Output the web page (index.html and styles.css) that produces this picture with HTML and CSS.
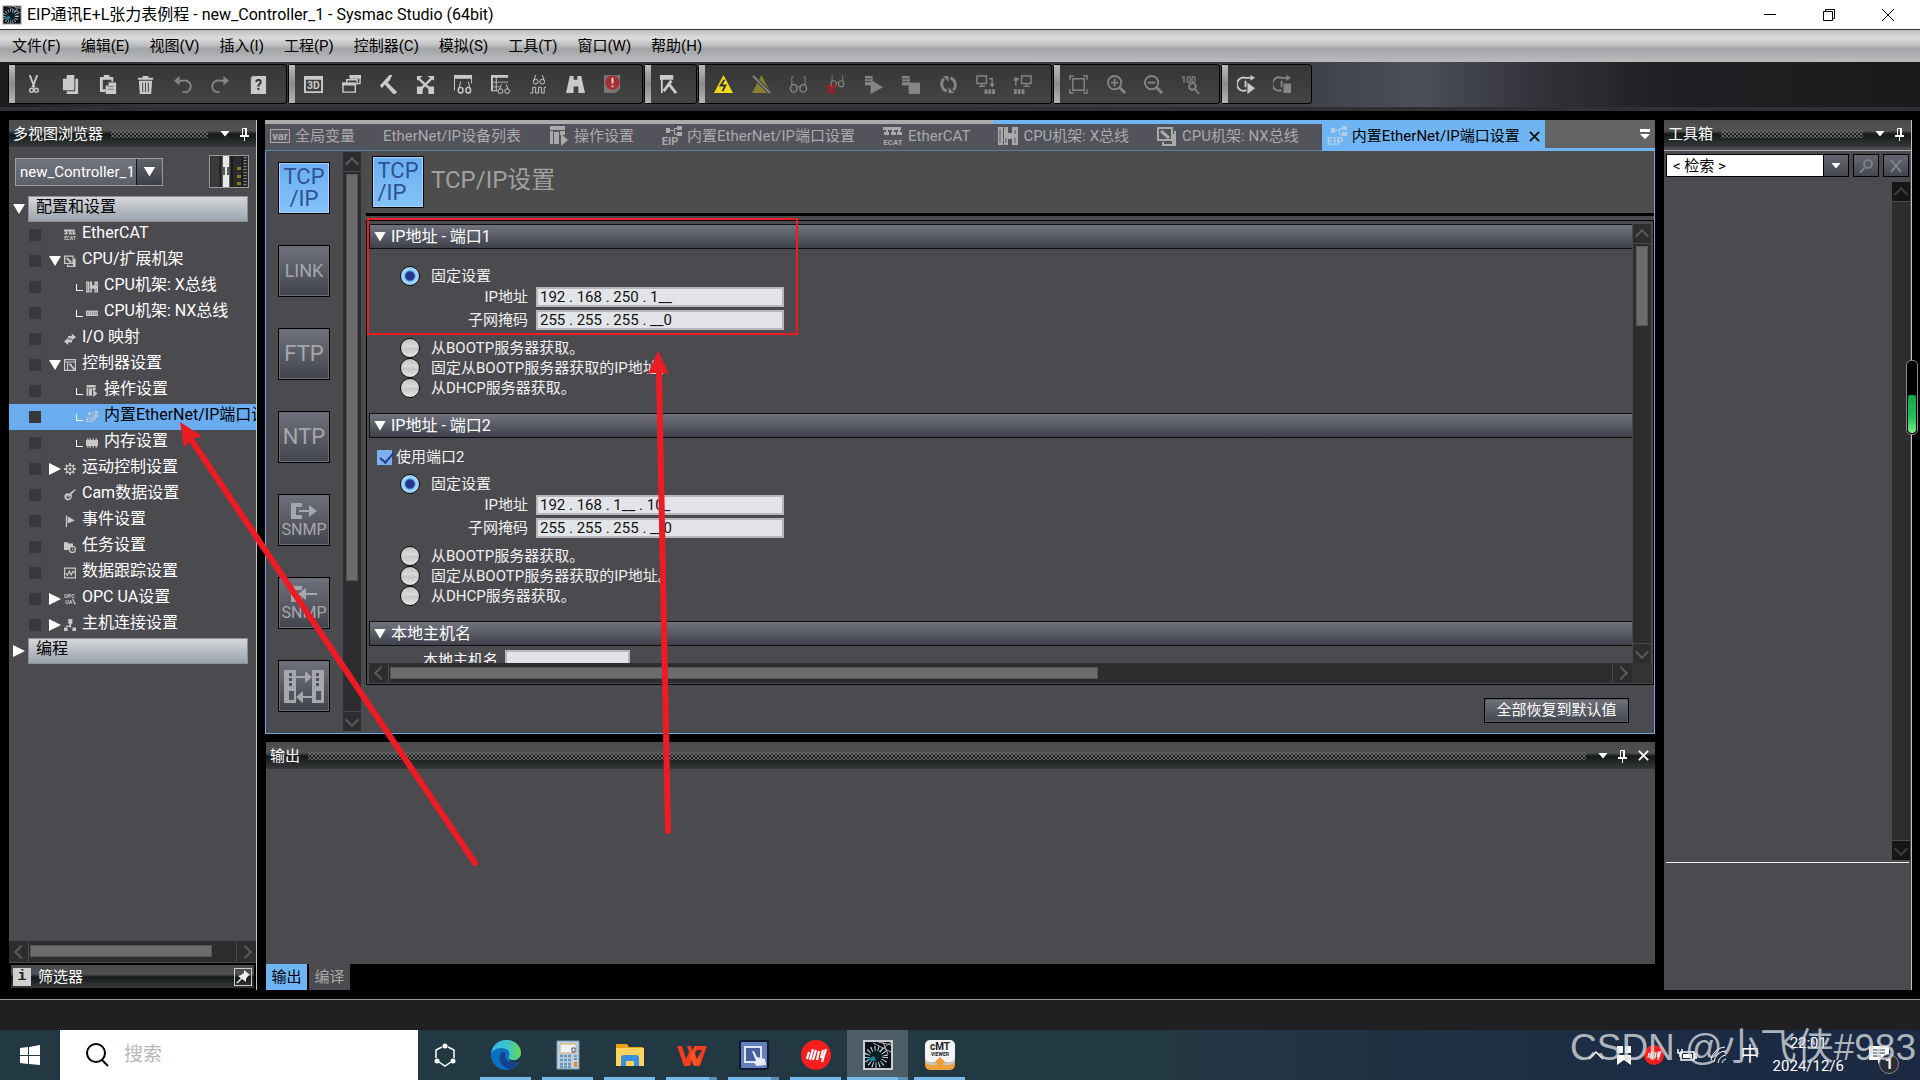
FILE: index.html
```html
<!DOCTYPE html>
<html lang="zh-CN">
<head>
  <meta charset="UTF-8">
  <meta name="viewport" content="width=device-width, initial-scale=1.0">
  <title>EIP通讯E+L张力表例程 - new_Controller_1 - Sysmac Studio (64bit)</title>
  <link rel="stylesheet" href="styles.css">
</head>
<body>
  <!-- Icon set -->
  <svg class="sprite" aria-hidden="true">
    <symbol id="i-var" viewBox="0 0 20 20"><rect x="0.500" y="3.500" width="19" height="13" fill="#5c5c60" stroke="currentColor"/><text x="10" y="14" font-size="11" font-weight="bold" text-anchor="middle" fill="currentColor">var</text></symbol>
    <symbol id="i-ecat" viewBox="0 0 20 20"><path d="M0 1h18v3H0zM3 4h2v5H3zM9 4h2v5H9zM15 4h2v5h-2zM1 6h5v3H1zM8 6h5v3H8zM14 6h5v3h-5z" fill="currentColor"/><text x="10" y="19" font-size="8" font-weight="bold" text-anchor="middle" fill="currentColor">ECAT</text></symbol>
    <symbol id="i-eip" viewBox="0 0 20 20"><path d="M4 2h4v5H4zM15 0h5v4h-5zM15 6h5v4h-5zM8 4h4v1H8zM12 2h3v1h-2v5h2v1h-3z" fill="currentColor"/><text x="8" y="19" font-size="11" font-weight="bold" text-anchor="middle" fill="currentColor">EIP</text></symbol>
    <symbol id="i-op" viewBox="0 0 20 20"><path d="M1 0h15v4H1zM1 5h3v13H1zM5 6h5v12H5zM11 5h5v4h-5z" fill="currentColor"/><path d="M12 8l7 6-7 6z" fill="currentColor"/></symbol>
    <symbol id="i-rack" viewBox="0 0 20 20"><path d="M0 1h5v18H0zM6 1h4v18H6zM14 1h6v18h-6zM10 7h4v6h-4z" fill="currentColor"/><path d="M2 3v14M8 12v5M17 4v4M17 12v5" stroke="#55565e" fill="none"/></symbol>
    <symbol id="i-nxrack" viewBox="0 0 20 20"><path d="M0 6h20v9H0z" fill="currentColor"/><path d="M3 8v5M7 8v5M11 8v5M15 8v5M18 8v5" stroke="#4b4a4f"/></symbol>
    <symbol id="i-cpu" viewBox="0 0 20 20"><path d="M1 2h14v12H1zM18 5v14H6v-3" fill="none" stroke="currentColor" stroke-width="2"/><path d="M4 5l8 7" stroke="currentColor" stroke-width="3"/><path d="M15 8h4v11h-4z" fill="currentColor"/></symbol>
    <symbol id="i-io" viewBox="0 0 20 20"><path d="M6 5h7V1l7 6-7 5V9H8zM14 11H7V8l-7 6 7 6v-4h6z" fill="currentColor"/></symbol>
    <symbol id="i-ctrl" viewBox="0 0 20 20"><path d="M1 1h18v18H1zM1 5h18M6 5v14M8 9h5" fill="none" stroke="currentColor" stroke-width="2"/><path d="M10 9l8 9" stroke="currentColor" stroke-width="3"/></symbol>
    <symbol id="i-mem" viewBox="0 0 20 20"><path d="M0 5h20v10H0zM2 2h2v16H2zM6 2h2v16H6zM11 2h2v16h-2zM16 2h2v16h-2z" fill="currentColor"/></symbol>
    <symbol id="i-gear" viewBox="0 0 20 20"><circle cx="10" cy="10" r="6" fill="none" stroke="currentColor" stroke-width="2"/><circle cx="10" cy="10" r="2.500" fill="currentColor"/><path d="M10 0v4M10 16v4M0 10h4M16 10h4M3 3l3 3M14 14l3 3M17 3l-3 3M6 14l-3 3" stroke="currentColor" stroke-width="3"/></symbol>
    <symbol id="i-cam" viewBox="0 0 20 20"><path d="M13 9c1 6-2 10-7 10-6-1-7-8-3-11 2-1 4-1 6 0l8-7h3L9 13c-2 1-4-1-2-3-3 0-4 6-1 6 3 1 5-2 5-5z" fill="currentColor"/></symbol>
    <symbol id="i-flag" viewBox="0 0 20 20"><path d="M3 1h2v19H3zM6 2l12 7-12 5z" fill="currentColor"/></symbol>
    <symbol id="i-task" viewBox="0 0 20 20"><path d="M0 2h6l2 2h7v5l-6 6H0z" fill="currentColor"/><circle cx="14" cy="14" r="5" fill="#4b4a4f" stroke="currentColor" stroke-width="2"/><path d="M14 11v4h2" stroke="currentColor" fill="none"/></symbol>
    <symbol id="i-trace" viewBox="0 0 20 20"><path d="M1 2h18v16H1z M3 10l3 4 3-7 3 6 3-6 3 3" fill="none" stroke="currentColor" stroke-width="2"/></symbol>
    <symbol id="i-opc" viewBox="0 0 20 20"><text x="9" y="9" font-size="9" font-weight="bold" text-anchor="middle" fill="currentColor">OPC</text><text x="8" y="19" font-size="9" font-weight="bold" text-anchor="middle" fill="currentColor">UA</text><path d="M14 10l5 9" stroke="currentColor" stroke-width="2"/></symbol>
    <symbol id="i-host" viewBox="0 0 20 20"><path d="M7 0h7v8H7zM9 8h3v6H9zM0 14h6v6H0zM14 14h6v6h-6zM3 11h7v2H3z" fill="currentColor"/></symbol>
    <symbol id="i-pin" viewBox="0 0 10 14"><path d="M2.500 1.500h4v7h-4z" fill="none" stroke="#fff"/><path d="M5 1h2v8H5zM0 8h9v2H0zM4 10h1v4H4z" fill="#fff"/></symbol>
    <symbol id="i-glasses" viewBox="0 0 20 20"><path d="M5 2H3v10M15 2h2v10M8 13q2-2 4 0" fill="none" stroke="currentColor"/><ellipse cx="5" cy="14" rx="3.500" ry="4" fill="none" stroke="currentColor" stroke-width="1.500"/><ellipse cx="15" cy="14" rx="3.500" ry="4" fill="none" stroke="currentColor" stroke-width="1.500"/></symbol>
    <symbol id="i-dyp" viewBox="0 0 30 30"><circle cx="15" cy="15" r="15" fill="#fa1e1e"/><path d="M8 12l-2 7M12 9l-3 11M15 10l-3 10M18 11l-2 9M22 10l-2 8M25 9l-4 13" stroke="#fff" stroke-width="2.200" fill="none"/></symbol>
    <symbol id="i-sysmac" viewBox="0 0 30 30"><rect x="1" y="1" width="28" height="28" fill="#0d1014" stroke="#c9ccd0" stroke-width="2"/><path d="M10 3l18 9M28 2L16 12M20 2l5 12M15 2l13 3" stroke="#aab0b4"/><ellipse cx="13" cy="17" rx="9" ry="8" fill="none" stroke="#b4dcea" stroke-width="6" stroke-dasharray="1 2.200"/><ellipse cx="13" cy="16" rx="6" ry="5" fill="#082028"/><path d="M3 20l8-4 2 5z" fill="#1d8a96"/></symbol>
  </svg>

  <header class="titlebar">
    <svg class="app-icon"><use href="#i-sysmac"/></svg>
    <h1 class="title">EIP通讯E+L张力表例程 - new_Controller_1 - Sysmac Studio (64bit)</h1>
    <div class="window-buttons">
      <button aria-label="最小化"><svg width="14" height="14"><path d="M1 6.500h12" stroke="#000"/></svg></button>
      <button aria-label="还原"><svg width="14" height="14"><path d="M1.500 3.500h9v9h-9zM3.500 3V1.500h9v9H11" fill="none" stroke="#000"/></svg></button>
      <button aria-label="关闭"><svg width="14" height="14"><path d="M1 1l12 12M13 1L1 13" stroke="#000"/></svg></button>
    </div>
  </header>

  <nav class="menubar">
    <button>文件(F)</button>
    <button>编辑(E)</button>
    <button>视图(V)</button>
    <button>插入(I)</button>
    <button>工程(P)</button>
    <button>控制器(C)</button>
    <button>模拟(S)</button>
    <button>工具(T)</button>
    <button>窗口(W)</button>
    <button>帮助(H)</button>
  </nav>

  <div class="toolbar-area">
    <div class="toolbar">
      <div class="tool-group g7">
        <button aria-label="剪切"><svg viewBox="0 0 20 20"><path d="M6 0l5 13M14 0L9 13" stroke="currentColor" stroke-width="2"/><circle cx="8" cy="16" r="2" fill="none" stroke="currentColor" stroke-width="1.500"/><circle cx="13" cy="16" r="2" fill="none" stroke="currentColor" stroke-width="1.500"/></svg></button>
        <button aria-label="复制"><svg viewBox="0 0 20 20"><path d="M6 0h8v16H2V4h4z" fill="currentColor"/><path d="M15 4h3v16H6v-3h9z" fill="currentColor"/></svg></button>
        <button aria-label="粘贴"><svg viewBox="0 0 20 20"><path d="M1 2h4V0h6v2h4v5h-2V5H4v10h3v3H1z" fill="currentColor"/><path d="M10 8h8v12H7v-9h3z" fill="currentColor"/><path d="M9 12h7M9 15h7" stroke="#777"/></svg></button>
        <button aria-label="删除"><svg viewBox="0 0 20 20"><path d="M2 3h16v2H2zM7 1h6v2H7zM3 6h14l-1 14H4z" fill="currentColor"/><path d="M7 8v10M10 8v10M13 8v10" stroke="#3f3f3f"/></svg></button>
        <button class="dim" aria-label="撤消"><svg viewBox="0 0 20 20"><path d="M4 6h7a6 6 0 0 1 3 12h-4" fill="none" stroke="currentColor" stroke-width="2"/><path d="M7 1L1 6l6 5z" fill="currentColor"/></svg></button>
        <button class="dim" aria-label="重做"><svg viewBox="0 0 20 20"><path d="M16 6H9a6 6 0 0 0-3 12h3" fill="none" stroke="currentColor" stroke-width="2"/><path d="M13 1l6 5-6 5z" fill="currentColor"/></svg></button>
        <button aria-label="帮助"><svg viewBox="0 0 20 20"><path d="M7 1h12v19H3V5z" fill="currentColor"/><path d="M2 4l4-4v4z" fill="currentColor"/><text x="11" y="16" font-size="15" font-weight="bold" text-anchor="middle" fill="#333">?</text></svg></button>
      </div>
      <div class="tool-group g9">
        <button aria-label="3D"><svg viewBox="0 0 20 20"><path d="M1 2h18v16H1z" fill="none" stroke="currentColor" stroke-width="2"/><path d="M1 2h18v3H1z" fill="currentColor"/><text x="10" y="15" font-size="11" font-weight="bold" text-anchor="middle" fill="currentColor">3D</text></svg></button>
        <button aria-label="层叠窗口"><svg viewBox="0 0 20 20"><path d="M8 1h11v8h-4M1 9h13v9H1zM5 8V5h11v3" fill="none" stroke="currentColor" stroke-width="1.500"/><path d="M8 0h12v4H8zM0 8h15v3H0z" fill="currentColor"/></svg></button>
        <button aria-label="编译"><svg viewBox="0 0 20 20"><path d="M1 11L11 0h3l-3 6-2 2 10 10-3 3L6 10l-3 4z" fill="currentColor"/></svg></button>
        <button aria-label="全部编译"><svg viewBox="0 0 20 20"><path d="M2 3l15 14M17 3L3 17" stroke="currentColor" stroke-width="2.500"/><path d="M1 12h6v8H1zM13 12h6v8h-6zM12 1h7v5zM1 1h6L1 6z" fill="currentColor"/></svg></button>
        <button aria-label="监视窗口"><svg viewBox="0 0 20 20"><path d="M0 0h19v4H0zM0 4h1v12H0zM18 4h1v5h-1z" fill="currentColor"/><ellipse cx="7" cy="16" rx="2.500" ry="3" fill="none" stroke="currentColor" stroke-width="1.500"/><ellipse cx="15" cy="16" rx="2.500" ry="3" fill="none" stroke="currentColor" stroke-width="1.500"/><path d="M5 15l2-8M17 15l-2-8" stroke="currentColor"/></svg></button>
        <button aria-label="监视表"><svg viewBox="0 0 20 20"><path d="M0 0h18v3H0zM0 3h2v14H0zM5 3h1v14H5zM0 7h18v1H0zM0 12h9v1H0zM0 16h7v1H0z" fill="currentColor"/><circle cx="10" cy="17" r="2.500" fill="none" stroke="currentColor"/><circle cx="17" cy="17" r="2.500" fill="none" stroke="currentColor"/><path d="M9 15l2-5M18 15l-2-5" stroke="currentColor"/></svg></button>
        <button aria-label="数据跟踪"><svg viewBox="0 0 20 20"><circle cx="7" cy="7" r="2.500" fill="none" stroke="currentColor"/><circle cx="14" cy="7" r="2.500" fill="none" stroke="currentColor"/><path d="M5 6l2-6M16 6l-2-6M1 19h3v-6h3v6h3v-6h3v6h3v-6h2" fill="none" stroke="currentColor"/></svg></button>
        <button aria-label="查找"><svg viewBox="0 0 20 20"><path d="M4 1h4v4h4V1h4l4 18h-7v-7H8v7H0z" fill="currentColor"/></svg></button>
        <button aria-label="错误"><svg viewBox="0 0 20 20"><path d="M1 0h17v15l-5 4H1z" fill="#777"/><circle cx="10" cy="8" r="7.500" fill="#a82c34"/><path d="M9 3h2v6H9zM9 11h2v2H9z" fill="#ddd"/></svg></button>
      </div>
      <div class="tool-group g1">
        <button aria-label="故障排除"><svg viewBox="0 0 20 20"><path d="M1 0h14v5H1zM2 5h2v14H2z" fill="currentColor"/><path d="M5 17l8-11M10 9l8 10" stroke="currentColor" stroke-width="3"/></svg></button>
      </div>
      <div class="tool-group g9">
        <button aria-label="在线"><svg viewBox="0 0 20 20"><path d="M10 0l10 19H0z" fill="#f2d91c"/><path d="M11 5l-4 6h5l-3 6" fill="none" stroke="#333" stroke-width="2"/></svg></button>
        <button class="dim" aria-label="离线"><svg viewBox="0 0 20 20"><path d="M10 0l10 19H0z" fill="#8a7f30"/><path d="M1 1l18 18" stroke="#3f3f3f" stroke-width="4"/><path d="M1 1l18 18" stroke="currentColor" stroke-width="2"/></svg></button>
        <button class="dim" aria-label="监视"><svg><use href="#i-glasses"/></svg></button>
        <button class="dim" aria-label="停止监视"><svg viewBox="0 0 20 20"><use href="#i-glasses" x="4" y="-2" width="16" height="16"/><path d="M1 10l9 9M10 10l-9 9" stroke="#a01c2c" stroke-width="3"/></svg></button>
        <button class="dim" aria-label="运行模式"><svg viewBox="0 0 20 20"><path d="M1 1h8v10H1z" fill="currentColor"/><path d="M1 4h7M1 7h7" stroke="#3f3f3f"/><path d="M7 5l13 8-13 7z" fill="currentColor"/></svg></button>
        <button class="dim" aria-label="程序模式"><svg viewBox="0 0 20 20"><path d="M1 1h8v10H1z" fill="currentColor"/><path d="M1 4h7M1 7h7" stroke="#3f3f3f"/><path d="M8 8h12v12H8z" fill="currentColor"/></svg></button>
        <button class="dim" aria-label="同步"><svg viewBox="0 0 20 20"><path d="M12 3a8 8 0 0 1 3 13M8 17A8 8 0 0 1 5 4" fill="none" stroke="currentColor" stroke-width="3"/><path d="M4 1h6v6zM16 19h-6v-6z" fill="currentColor"/></svg></button>
        <button class="dim" aria-label="传送到控制器"><svg viewBox="0 0 20 20"><path d="M1 1h10v8H1zM3 12h7M6 9v3M14 4h3v7M15 9l2 3 2-3" fill="none" stroke="currentColor" stroke-width="1.500"/><path d="M9 15h3v5H9zM13 15h3v5h-3zM17 15h3v5h-3z" fill="currentColor"/></svg></button>
        <button class="dim" aria-label="从控制器传送"><svg viewBox="0 0 20 20"><path d="M9 1h10v8H9zM11 12h7M14 9v3M6 4H3v7M1 6l2-3 2 3" fill="none" stroke="currentColor" stroke-width="1.500"/><path d="M1 15h3v5H1zM5 15h3v5H5zM9 15h3v5H9z" fill="currentColor"/></svg></button>
      </div>
      <div class="tool-group g4">
        <button class="dim" aria-label="适合窗口"><svg viewBox="0 0 20 20"><path d="M4 4h12v12H4zM1 5V1h4M15 1h4v4M19 15v4h-4M5 19H1v-4" fill="none" stroke="currentColor" stroke-width="1.500"/></svg></button>
        <button class="dim" aria-label="放大"><svg viewBox="0 0 20 20"><circle cx="8" cy="8" r="7" fill="none" stroke="currentColor" stroke-width="2"/><path d="M13 13l6 6" stroke="currentColor" stroke-width="3"/><path d="M4 8h8M8 4v8" stroke="currentColor" stroke-width="2"/></svg></button>
        <button class="dim" aria-label="缩小"><svg viewBox="0 0 20 20"><circle cx="8" cy="8" r="7" fill="none" stroke="currentColor" stroke-width="2"/><path d="M13 13l6 6" stroke="currentColor" stroke-width="3"/><path d="M4 8h8" stroke="currentColor" stroke-width="2"/></svg></button>
        <button class="dim" aria-label="100%"><svg viewBox="0 0 20 20"><text x="8" y="8" font-size="9" font-weight="bold" text-anchor="middle" fill="currentColor">100</text><circle cx="12" cy="12" r="3.500" fill="none" stroke="currentColor" stroke-width="2"/><path d="M15 15l4 5" stroke="currentColor" stroke-width="2"/></svg></button>
      </div>
      <div class="tool-group g2">
        <button aria-label="运行模拟"><svg viewBox="0 0 20 20"><path d="M14 3H9a7 7 0 1 0 1 13M9 6v7" fill="none" stroke="currentColor" stroke-width="2"/><path d="M14 0l5 3-5 3zM11 8l8 6-8 6z" fill="currentColor"/></svg></button>
        <button class="dim" aria-label="停止模拟"><svg viewBox="0 0 20 20"><path d="M14 3H9a7 7 0 1 0 0 13M9 6v7" fill="none" stroke="currentColor" stroke-width="2"/><path d="M14 0l5 3-5 3zM11 9h8v10h-8z" fill="currentColor"/></svg></button>
      </div>
    </div>
  </div>

  <main class="workspace">
    <!-- Multiview explorer -->
    <aside class="panel explorer">
      <div class="panel-head">
        <h2>多视图浏览器</h2><span class="dots"></span><i class="tri-down small"></i><svg class="pin"><use href="#i-pin"/></svg>
      </div>
      <div class="device-row">
        <div class="combo">
          <select aria-label="设备"><option>new_Controller_1</option></select>
          <span class="combo-arrow"><i class="tri-down"></i></span>
        </div>
        <svg class="device-pic" viewBox="0 0 40 33"><rect width="40" height="33" fill="#2b2b2d"/><path d="M2 0h8v33H2z" fill="#3a3a3c"/><path d="M12 0h9v33h-9z" fill="#58595b"/><path d="M14 0h6v12h-2v8h2v13h-6V20h2v-8h-2z" fill="#e8e8e8"/><path d="M12 0v33M23 0v33M33 0v33" stroke="#111"/><path d="M28 12h4v3h-4zM28 20h4v3h-4zM28 27h4v3h-4z" fill="#8a7c1c"/><path d="M36 2v30" stroke="#888" stroke-width="3" stroke-dasharray="1 2"/><rect x="0.500" y="0.500" width="39" height="32" fill="none" stroke="#999"/></svg>
      </div>
      <div class="tree">
        <div class="tree-section"><i class="tri-down"></i><span>配置和设置</span></div>
        <div class="tree-row"><b></b><i></i><svg><use href="#i-ecat"/></svg><span>EtherCAT</span></div>
        <div class="tree-row"><b></b><i class="tri-down"></i><svg><use href="#i-cpu"/></svg><span>CPU/扩展机架</span></div>
        <div class="tree-row sub"><b></b><i></i><svg><use href="#i-rack"/></svg><span>CPU机架: X总线</span></div>
        <div class="tree-row sub"><b></b><i></i><svg><use href="#i-nxrack"/></svg><span>CPU机架: NX总线</span></div>
        <div class="tree-row"><b></b><i></i><svg><use href="#i-io"/></svg><span>I/O 映射</span></div>
        <div class="tree-row"><b></b><i class="tri-down"></i><svg><use href="#i-ctrl"/></svg><span>控制器设置</span></div>
        <div class="tree-row sub"><b></b><i></i><svg><use href="#i-op"/></svg><span>操作设置</span></div>
        <div class="tree-row sub selected"><b></b><i></i><svg><use href="#i-eip"/></svg><span>内置EtherNet/IP端口设置</span></div>
        <div class="tree-row sub"><b></b><i></i><svg><use href="#i-mem"/></svg><span>内存设置</span></div>
        <div class="tree-row"><b></b><i class="tri-right"></i><svg><use href="#i-gear"/></svg><span>运动控制设置</span></div>
        <div class="tree-row"><b></b><i></i><svg><use href="#i-cam"/></svg><span>Cam数据设置</span></div>
        <div class="tree-row"><b></b><i></i><svg><use href="#i-flag"/></svg><span>事件设置</span></div>
        <div class="tree-row"><b></b><i></i><svg><use href="#i-task"/></svg><span>任务设置</span></div>
        <div class="tree-row"><b></b><i></i><svg><use href="#i-trace"/></svg><span>数据跟踪设置</span></div>
        <div class="tree-row"><b></b><i class="tri-right"></i><svg><use href="#i-opc"/></svg><span>OPC UA设置</span></div>
        <div class="tree-row"><b></b><i class="tri-right"></i><svg><use href="#i-host"/></svg><span>主机连接设置</span></div>
        <div class="tree-section"><i class="tri-right"></i><span>编程</span></div>
      </div>
      <div class="scroll-h">
        <button class="sb left" aria-label="左移"></button><div class="track"><div class="thumb explorer-thumb"></div></div><button class="sb right" aria-label="右移"></button>
      </div>
      <div class="filter">
        <span class="info">i</span><span class="filter-name">筛选器</span>
        <button aria-label="固定"><svg width="18" height="18" viewBox="0 0 18 18"><rect x="0.500" y="0.500" width="17" height="17" fill="none" stroke="#ccc"/><path d="M10 2l6 5-2 1-2 3v3L4 8l3-1 3-2z" fill="#eee"/><path d="M8 10l-5 5" stroke="#eee" stroke-width="1.500"/></svg></button>
      </div>
    </aside>

    <div class="center">
      <section class="document">
        <div class="tabs">
          <button class="tab"><svg><use href="#i-var"/></svg>全局变量</button>
          <button class="tab">EtherNet/IP设备列表</button>
          <button class="tab"><svg><use href="#i-op"/></svg>操作设置</button>
          <button class="tab"><svg><use href="#i-eip"/></svg>内置EtherNet/IP端口设置</button>
          <button class="tab"><svg><use href="#i-ecat"/></svg>EtherCAT</button>
          <button class="tab blue"><svg><use href="#i-rack"/></svg>CPU机架: X总线</button>
          <button class="tab blue"><svg><use href="#i-cpu"/></svg>CPU机架: NX总线</button>
          <button class="tab active"><svg><use href="#i-eip"/></svg>内置EtherNet/IP端口设置<svg class="tab-close" viewBox="0 0 12 12"><path d="M1 1l10 10M11 1L1 11" stroke="#111" stroke-width="2"/></svg></button>
          <div class="tabs-rest"><svg width="10" height="10"><path d="M0 0h10v3H0zM0 5h10l-5 5z" fill="#fff"/></svg></div>
        </div>

        <div class="editor">
          <nav class="side-nav">
            <button class="on">TCP<br>/IP</button>
            <button>LINK</button>
            <button>FTP</button>
            <button>NTP</button>
            <button class="snmp"><svg width="26" height="16"><path d="M0 0h11v4H5v8h6v4H0z" fill="currentColor"/><path d="M8 7h10V2l8 6-8 6V9H8z" fill="currentColor"/></svg>SNMP</button>
            <button class="snmp"><svg width="26" height="16"><path d="M0 0h11v4H5v8h6v4H0z" fill="currentColor"/><path d="M26 7H15V2L7 8l8 6V9h11z" fill="currentColor"/></svg>SNMP</button>
            <button aria-label="标签数据链接"><svg width="40" height="33" viewBox="0 0 40 33"><path d="M0 0h12v33H0zM28 0h12v33H28z" fill="currentColor"/><path d="M5 3h3v3H5zM5 8h3v3H5zM5 13h3v3H5zM32 3h3v3h-3zM32 8h3v3h-3zM32 13h3v3h-3zM5 21h5v9H5zM32 21h5v9h-5z" fill="#50535e"/><path d="M12 6h9V1l7 6-7 6V8h-9zM28 26h-9v-5l-7 6 7 6v-5h9z" fill="currentColor"/></svg></button>
          </nav>
          <div class="scroll-v nav-scroll">
            <button class="sb up" aria-label="上移"></button><div class="track"><div class="thumb nav-thumb"></div></div><button class="sb down" aria-label="下移"></button>
          </div>

          <div class="settings">
            <div class="settings-head"><span class="big-icon">TCP<br>/IP</span><h2>TCP/IP设置</h2></div>
            <div class="form-box">
              <form class="form">
                <h3><i class="tri-down"></i>IP地址 - 端口1</h3>
                <div class="form-body">
                  <label class="radio"><input type="radio" name="port1" checked>固定设置</label>
                  <div class="fields">
                    <label for="ip1">IP地址</label><input id="ip1" type="text" value="192 . 168 . 250 . 1__">
                    <label for="mask1">子网掩码</label><input id="mask1" type="text" value="255 . 255 . 255 . __0">
                  </div>
                  <label class="radio"><input type="radio" name="port1">从BOOTP服务器获取。</label>
                  <label class="radio"><input type="radio" name="port1">固定从BOOTP服务器获取的IP地址。</label>
                  <label class="radio"><input type="radio" name="port1">从DHCP服务器获取。</label>
                </div>
                <h3><i class="tri-down"></i>IP地址 - 端口2</h3>
                <div class="form-body port2">
                  <label class="check"><input type="checkbox" checked>使用端口2</label>
                  <label class="radio"><input type="radio" name="port2" checked>固定设置</label>
                  <div class="fields">
                    <label for="ip2">IP地址</label><input id="ip2" type="text" value="192 . 168 . 1__ . 10_">
                    <label for="mask2">子网掩码</label><input id="mask2" type="text" value="255 . 255 . 255 . __0">
                  </div>
                  <label class="radio"><input type="radio" name="port2">从BOOTP服务器获取。</label>
                  <label class="radio"><input type="radio" name="port2">固定从BOOTP服务器获取的IP地址。</label>
                  <label class="radio"><input type="radio" name="port2">从DHCP服务器获取。</label>
                </div>
                <h3><i class="tri-down"></i>本地主机名</h3>
                <div class="host-row"><label for="host">本地主机名</label><input id="host" type="text"></div>
              </form>
              <div class="scroll-v">
                <button class="sb up" aria-label="上移"></button><div class="track"><div class="thumb form-thumb"></div></div><button class="sb down" aria-label="下移"></button>
              </div>
              <div class="scroll-h">
                <button class="sb left" aria-label="左移"></button><div class="track"><div class="thumb form-thumb-h"></div></div><button class="sb right" aria-label="右移"></button>
              </div>
              <div class="corner"></div>
            </div>
            <div class="settings-foot"><button class="reset">全部恢复到默认值</button></div>
          </div>
        </div>
      </section>

      <section class="output">
        <div class="panel-head">
          <h2>输出</h2><span class="dots"></span><i class="tri-down small"></i><svg class="pin"><use href="#i-pin"/></svg><svg class="close" viewBox="0 0 12 12"><path d="M1 1l10 10M11 1L1 11" stroke="#fff" stroke-width="2"/></svg>
        </div>
        <div class="output-body"></div>
        <div class="output-tabs"><button class="current">输出</button><button>编译</button></div>
      </section>
    </div>

    <aside class="panel toolbox">
      <div class="panel-head">
        <h2>工具箱</h2><span class="dots"></span><i class="tri-down small"></i><svg class="pin"><use href="#i-pin"/></svg>
      </div>
      <div class="search-row">
        <input type="text" aria-label="检索" value="&lt; 检索 &gt;">
        <button class="drop" aria-label="展开"><i class="tri-down small"></i></button>
        <button aria-label="查找"><svg width="14" height="14" viewBox="0 0 14 14"><circle cx="9" cy="5" r="4" fill="none" stroke="#7d7f87" stroke-width="2"/><path d="M6 8l-5 6" stroke="#7d7f87" stroke-width="2"/></svg></button>
        <button aria-label="清除"><svg width="14" height="14" viewBox="0 0 14 14"><path d="M2 1l10 12M12 1L2 13" stroke="#7d7f87" stroke-width="2"/></svg></button>
      </div>
      <div class="toolbox-body">
        <div class="scroll-v">
          <button class="sb up" aria-label="上移"></button><div class="track"></div><button class="sb down" aria-label="下移"></button>
        </div>
      </div>
      <div class="toolbox-desc"></div>
    </aside>
  </main>

  <div class="statusbar"></div>

  <footer class="taskbar">
    <button class="start" aria-label="开始"><svg width="20" height="20"><path d="M0 3l8-1v8H0zM9 2l11-2v10H9zM0 11h8v8l-8-1zM9 11h11v9L9 19z" fill="#fff"/></svg></button>
    <label class="task-search"><svg width="24" height="24"><circle cx="11" cy="10" r="9" fill="none" stroke="#000" stroke-width="2"/><path d="M17 17l6 6" stroke="#000" stroke-width="2"/></svg><input type="text" placeholder="搜索" aria-label="搜索"></label>
    <button class="ring" aria-label="Copilot"><svg width="22" height="24"><path d="M8 4L2 7v8M14 4l6 3v8M5 19l6 4 6-4" fill="none" stroke="#fff" stroke-width="1.500"/><circle cx="11" cy="3" r="2.500" fill="#fff"/><circle cx="3" cy="18" r="2.500" fill="#fff"/><circle cx="19" cy="18" r="2.500" fill="#fff"/></svg></button>
    <div class="apps">
      <button aria-label="Edge"><svg viewBox="0 0 30 30"><defs><linearGradient id="edge" x1="0" x2="1"><stop offset="0" stop-color="#35b8f0"/><stop offset="0.600" stop-color="#3dc5c0"/><stop offset="1" stop-color="#69d84a"/></linearGradient></defs><circle cx="15" cy="15" r="15" fill="#0d6fc4"/><path d="M0 14C1 5 8 0 15 0c9 0 15 6 15 13 0 5-5 8-9 7-4 0-4-2-3-4 2-5-3-8-8-8C5 8 1 11 0 14z" fill="url(#edge)"/><path d="M11 12c-6 7 0 15 7 17 5-1 8-4 10-8-6 3-13 1-14-4 0-2 0-3 1-5z" fill="#14418c"/><path d="M18 16c-1 2 0 4 3 4 4 1 8-1 9-5v6l-2 1c-6 2-12 0-10-6z" fill="#223842"/></svg></button>
      <button aria-label="计算器"><svg viewBox="0 0 30 30"><path d="M4 1h22v28H4z" fill="#b9d2e6" stroke="#7f9db5"/><path d="M7 4h16v9H7z" fill="#e9f4fb" stroke="#e0aa58"/><path d="M19 8h3v4h-3z" fill="none" stroke="#456"/><path d="M7 16h12M7 20h12M7 24h12M7 27h12" stroke="#7194b2" stroke-width="2.500" stroke-dasharray="3 1"/><path d="M21 16h3M21 19h3" stroke="#7194b2" stroke-width="2"/><path d="M21 22h3v5h-3z" fill="#f08a1c"/></svg></button>
      <button aria-label="资源管理器"><svg viewBox="0 0 30 30"><path d="M1 4h11l2 3h14v19H1z" fill="#e5a316"/><path d="M1 8h28v18H1z" fill="#ffd45c"/><path d="M6 26V18q0-3 3-3h12q3 0 3 3v8h-5v-5h-8v5z" fill="#3c8ede"/></svg></button>
      <button class="multi" aria-label="WPS"><svg viewBox="0 0 30 30"><path d="M0 6h5l4 13 3-7-2-6h4l2 5 2-5h12l-7 20h-6l-2-6-2 6H7z" fill="#f33b1e"/><path d="M24 10l-4 10-3-7 3-7h-3l-4 10 3 9h6z" fill="#ff7a26" opacity="0.400"/><path d="M20 19l-2-6 2-3h5z" fill="#223842"/></svg></button>
      <button class="multi" aria-label="触摸屏"><svg viewBox="0 0 30 30"><rect x="1" y="1" width="28" height="28" rx="2" fill="#637fbd" stroke="#10192d" stroke-width="2"/><rect x="6" y="7" width="16" height="15" fill="#445f9d" stroke="#dfe6f5" stroke-width="2"/><path d="M13 11l2 0 3 6 8 2 1 6-9 1-5-5h4z" fill="#e6ebf4"/></svg></button>
      <button aria-label="DYP"><svg><use href="#i-dyp"/></svg></button>
      <button class="multi running" aria-label="Sysmac Studio"><svg><use href="#i-sysmac"/></svg></button>
      <button aria-label="cMT Viewer"><svg viewBox="0 0 30 30"><rect y="4" width="30" height="26" rx="5" fill="#eda33c"/><rect y="2" width="30" height="23" rx="5" fill="#c4c4c4"/><rect width="30" height="22" rx="5" fill="#f3f3f3"/><text x="15" y="10" font-size="10" font-weight="bold" text-anchor="middle" fill="#222">cMT</text><text x="15" y="16" font-size="5" font-weight="bold" text-anchor="middle" fill="#222">VIEWER</text><path d="M15 17l6 6h-3v6h-6v-6H9z" fill="#f29a2e"/></svg></button>
    </div>
    <div class="tray">
      <svg width="16" height="10"><path d="M1 9l7-7 7 7" fill="none" stroke="#fff" stroke-width="1.500"/></svg>
      <svg width="14" height="20"><path d="M0 1h6v7H0zM8 1h6v7H8zM0 10h14v10l-7-5-7 5z" fill="#fff"/></svg>
      <svg width="20" height="20"><use href="#i-dyp"/></svg>
      <svg width="20" height="16"><path d="M4 5h13v8H4zM18 7h2v4h-2zM1 2v4h4V2M3 6v4" fill="none" stroke="#fff" stroke-width="1.500"/><path d="M6 7h9v4H6z" fill="#fff"/></svg>
      <svg width="18" height="18"><path d="M1 14A15 15 0 0 1 15 1M4 16A12 12 0 0 1 16 5M8 17a9 9 0 0 1 8-8M12 17a5 5 0 0 1 4-4" fill="none" stroke="#fff"/></svg>
      <span class="ime">中</span>
      <div class="clock"><time>22:01</time><time>2024/12/6</time></div>
      <span class="notice"><svg width="20" height="20"><path d="M0 1h20v14h-8l-3 4v-4H0z" fill="#fff"/><path d="M4 5h12M4 8h12M4 11h8" stroke="#1d2d45"/></svg><b>1</b></span>
    </div>
  </footer>

  <!-- Annotation layer -->
  <svg class="annotations" width="1920" height="1080" aria-hidden="true">
    <rect x="368" y="219" width="429" height="115" fill="none" stroke="#ed1c24" stroke-width="2"/>
    <path d="M475 863L190 438" stroke="#ed1c24" stroke-width="6" stroke-linecap="round"/>
    <path d="M180 422l22 14-9 3-9 8z" fill="#ed1c24"/>
    <path d="M668 831L659 372" stroke="#ed1c24" stroke-width="6" stroke-linecap="round"/>
    <path d="M658 351l11 23-10-2-11 2z" fill="#ed1c24"/>
  </svg>
  <div class="battery"><span></span></div>
  <div class="watermark">CSDN @小飞侠#983</div>
</body>
</html>
```

FILE: styles.css
```css
* {
  box-sizing: border-box;
}

body {
  margin: 0;
  height: 100vh;
  display: flex;
  flex-direction: column;
  position: relative;
  overflow: hidden;
  background: #000;
  color: #fff;
  font-family: Roboto, "Noto Sans CJK SC", sans-serif;
  font-size: 15px;
  line-height: 20px;
}

button, input, select {
  font: inherit;
  color: inherit;
  margin: 0;
  padding: 0;
  border: none;
  border-radius: 0;
  background: none;
}

h1, h2, h3 {
  margin: 0;
  font-size: inherit;
  font-weight: normal;
}

svg {
  display: block;
  flex: none;
}

.sprite {
  display: none;
}

/* Triangles */
.tri-down, .tri-right {
  display: block;
  flex: none;
  width: 12px;
  height: 10px;
  background: #fff;
  clip-path: polygon(0 0, 100% 0, 50% 100%);
}

.tri-right {
  width: 10px;
  height: 12px;
  clip-path: polygon(0 0, 100% 50%, 0 100%);
}

.tri-down.small {
  width: 10px;
  height: 6px;
}

/* Title and menu */
.titlebar {
  display: flex;
  align-items: center;
  height: 30px;
  padding: 0 3px 0 2px;
  background: #fff;
  border-bottom: 1px solid #2c3230;
  color: #000;
}

.app-icon {
  width: 20px;
  height: 20px;
}

.title {
  margin-left: 5px;
  flex: 1;
  font-size: 16px;
}

.window-buttons button {
  width: 59px;
  height: 28px;
}

.window-buttons svg {
  margin: auto;
}

.window-buttons {
  display: flex;
}

.menubar {
  display: flex;
  gap: 20px;
  height: 32px;
  padding-left: 12px;
  background: linear-gradient(#bdbebf, #dcdcdc 25%, #c2c2c3 45%, #a3a4a7 60%, #b7b9ba 95%);
  color: #000;
}

/* Toolbar */
.toolbar-area {
  height: 49px;
  padding: 2px 8px 0;
  border-bottom: 4px solid #2e3034;
  background: linear-gradient(90deg, #1b1b1d, #35373d 8%, #35373d 50%, #40424a 68%, #4d4f58 74%, #33343a 80%, #202124 86%, #1a1a1c);
}

.toolbar {
  display: flex;
  gap: 1px;
  max-width: 1304px;
}

.tool-group {
  display: flex;
  height: 40px;
  padding-right: 10px;
  border: 1px solid #000;
  border-radius: 3px;
  background: linear-gradient(#363636, #444);
}

.tool-group::before {
  content: "";
  width: 6px;
  background: linear-gradient(#bbb, #8b8b8b 50%, #b5b5b5);
}

.tool-group button {
  flex: 1;
  color: #cacaca;
}

.tool-group button.dim {
  color: #858585;
}

.tool-group svg {
  width: 19px;
  height: 19px;
  margin: auto;
}

.g1 { flex: 1 0 16px; }
.g2 { flex: 2 0 16px; }
.g4 { flex: 4 0 16px; }
.g7 { flex: 7 0 16px; }
.g9 { flex: 9 0 16px; }

/* Workspace */
.workspace {
  flex: 1;
  min-height: 0;
  display: grid;
  grid-template-columns: 248px 1fr 248px;
  gap: 8px;
  padding: 9px 8px 9px 9px;
}

.panel {
  display: flex;
  flex-direction: column;
  min-height: 0;
  overflow: hidden;
  background: #4b4a4f;
  border-right: 1px solid #c4c4c4;
}

.panel-head {
  display: flex;
  align-items: center;
  flex: none;
  height: 27px;
  padding: 0 6px 0 4px;
  background: linear-gradient(#4b4b4c, #505152 40%, #16191a 52%, #35393a);
}

.dots {
  flex: 1;
  height: 8px;
  margin: 0 12px 0 8px;
  background-image: radial-gradient(#666 1px, transparent 1px), radial-gradient(#666 1px, transparent 1px);
  background-size: 4px 4px;
  background-position: 0 0, 2px 2px;
}

.pin {
  width: 10px;
  height: 14px;
  margin-left: 10px;
}

.close {
  width: 11px;
  height: 11px;
  margin-left: 10px;
}

/* Explorer */
.device-row {
  display: flex;
  justify-content: space-between;
  align-items: center;
  height: 49px;
  padding: 0 7px 0 6px;
}

.combo {
  position: relative;
  width: 148px;
  height: 28px;
  border: 1px solid #9c9c9c;
  background: linear-gradient(#73757e, #5c5e68);
}

.combo select {
  appearance: none;
  width: 100%;
  height: 100%;
  padding-left: 4px;
}

.combo-arrow {
  position: absolute;
  top: 0;
  right: 0;
  bottom: 0;
  display: flex;
  align-items: center;
  justify-content: center;
  width: 26px;
  border-left: 1px solid #111;
  background: linear-gradient(#5f616b, #3d3f48);
  pointer-events: none;
}

.device-pic {
  width: 40px;
  height: 33px;
}

.tree {
  flex: 1;
  font-size: 16px;
}

.tree-section {
  display: flex;
  align-items: center;
  gap: 3px;
  height: 26px;
  padding: 0 8px 0 4px;
}

.tree-section i {
  width: 12px;
}

.tree-section span {
  flex: 1;
  height: 26px;
  padding-left: 7px;
  background: linear-gradient(#d6d7d9, #9aa3ad);
  border: 1px solid #8b9096;
  color: #000;
}

.tree-row {
  display: flex;
  align-items: center;
  height: 26px;
  padding-left: 20px;
  white-space: nowrap;
}

.tree-row b {
  flex: none;
  width: 12px;
  height: 12px;
  margin-right: 8px;
  background: #39383d;
}

.tree-row i {
  flex: none;
  width: 12px;
  margin-right: 3px;
}

.tree-row svg {
  width: 12px;
  height: 12px;
  margin-right: 6px;
  color: #c8c8c8;
}

.tree-row span {
  height: 24px;
}

.tree-row.sub i {
  width: 7px;
  height: 7px;
  margin: 0 3px 0 27px;
  border: solid #fff;
  border-width: 0 0 1px 1px;
}

.tree-row.selected {
  background: #6aacf0;
}

.tree-row.selected span {
  color: #000;
}

.filter {
  display: flex;
  align-items: center;
  height: 27px;
  margin-top: 1px;
  padding: 0 2px;
  border: 2px solid #000;
  background: linear-gradient(#4b4b4c, #505152 40%, #16191a 52%, #35393a);
}

.info {
  width: 18px;
  height: 18px;
  background: #d0d0d0;
  color: #222;
  font-family: "Liberation Mono", monospace;
  font-weight: bold;
  line-height: 18px;
  text-align: center;
}

.filter-name {
  flex: 1;
  margin-left: 7px;
}

/* Scroll bars */
.scroll-v, .scroll-h {
  display: flex;
  background: #2d2d2f;
}

.scroll-v {
  flex-direction: column;
  width: 18px;
}

.scroll-h {
  height: 21px;
}

.track {
  flex: 1;
}

.scroll-v .track {
  padding: 2px 3px;
}

.scroll-h .track {
  padding: 4px 1px;
}

.thumb {
  background: #6c6c6c;
  border: 1px solid #555;
}

.scroll-h .thumb {
  height: 12px;
}

.sb {
  display: flex;
  align-items: center;
  justify-content: center;
  flex: none;
  width: 18px;
  height: 20px;
}

.scroll-h .sb {
  width: 20px;
  height: auto;
}

.sb::before {
  content: "";
  width: 8px;
  height: 8px;
  border: solid #5c5c5c;
  border-width: 2px 0 0 2px;
}

.sb.up::before { transform: rotate(45deg); margin-top: 4px; }
.sb.down::before { transform: rotate(225deg); margin-bottom: 4px; }
.sb.left::before { transform: rotate(-45deg); margin-left: 4px; }
.sb.right::before { transform: rotate(135deg); margin-right: 4px; }

.sb.up { border-bottom: 1px solid #4b4a4f; }
.sb.down { border-top: 1px solid #4b4a4f; }
.sb.left { border-right: 1px solid #4b4a4f; }
.sb.right { border-left: 1px solid #4b4a4f; }

.explorer-thumb { width: 89%; }
.nav-thumb { height: 76%; }
.form-thumb { height: 80px; }
.form-thumb-h { width: 58%; }

/* Document */
.center {
  display: flex;
  flex-direction: column;
  gap: 8px;
  min-width: 0;
  min-height: 0;
  margin-right: 1px;
}

.document {
  flex: 1;
  min-height: 0;
  display: flex;
  flex-direction: column;
}

.tabs {
  display: flex;
  flex: none;
  height: 31px;
}

.tab {
  display: flex;
  align-items: center;
  gap: 5px;
  padding: 0 23px 2px 5px;
  border-top: 4px solid #ababab;
  border-bottom: 1px solid #5a7ba5;
  background: #52535b;
  color: #aaa;
  white-space: nowrap;
}

.tab svg {
  width: 20px;
  height: 20px;
}

.tab.blue {
  border-top-color: #70b5f3;
}

.tab.active {
  padding-right: 5px;
  border-color: #70b5f3;
  background: #70b5f3;
  color: #000;
}

.tab.active svg {
  color: #b4cde4;
}

.tab .tab-close {
  width: 11px;
  height: 11px;
  margin-left: 4px;
}

.tabs-rest {
  flex: 1;
  display: flex;
  align-items: center;
  justify-content: flex-end;
  padding-right: 5px;
  background: #646464;
  border-bottom: 3px solid #70b5f3;
}

.editor {
  flex: 1;
  min-height: 0;
  display: flex;
  background: #4b4a4f;
  border: 1px solid #6ca9e0;
  border-top: none;
}

.side-nav {
  display: flex;
  flex-direction: column;
  gap: 31px;
  width: 77px;
  padding: 11px 12px;
}

.side-nav button, .big-icon {
  display: flex;
  flex-direction: column;
  align-items: center;
  justify-content: center;
  flex: none;
  width: 52px;
  height: 52px;
  border: 1px solid #000;
  background: linear-gradient(#6f717c, #42444d);
  box-shadow: inset 0 0 0 1px #6a6c76;
  color: #a6a7ab;
  font-size: 22px;
  line-height: 22px;
}

.side-nav button.on, .big-icon {
  background: linear-gradient(#6aaef0, #84c2fa);
  box-shadow: inset 0 0 0 1px #a5d3fb;
  color: #2e5294;
}

.side-nav button.snmp {
  gap: 3px;
  font-size: 16px;
  line-height: 16px;
}

.side-nav button:nth-child(2) {
  font-size: 18px;
}

.nav-scroll {
  margin: 1px 5px 2px 0;
}

.settings {
  flex: 1;
  min-width: 0;
  display: flex;
  flex-direction: column;
}

.settings-head {
  display: flex;
  align-items: center;
  gap: 7px;
  flex: none;
  height: 65px;
  padding-left: 6px;
  background: #4d4d4d;
  border-bottom: 3px solid #000;
  color: #a0a0a0;
  font-size: 24px;
  line-height: 32px;
}

.settings-head h2 {
  padding-bottom: 4px;
}

.form-box {
  flex: 1;
  min-height: 0;
  display: grid;
  grid-template-columns: 1fr 20px;
  grid-template-rows: 1fr 20px;
  margin-top: 4px;
  padding: 3px 1px 1px 2px;
  border: 1px solid #000;
}

.form {
  min-height: 0;
  overflow: hidden;
}

.form-box .scroll-v {
  margin-left: 1px;
  border-right: 1px solid #4b4a4f;
  width: 19px;
}

.form-box .scroll-h {
  height: 20px;
}

.corner {
  background: #333;
}

.form h3 {
  display: flex;
  align-items: center;
  gap: 5px;
  height: 25px;
  padding-left: 4px;
  border: 1px solid #111;
  border-right: none;
  background: linear-gradient(#70727e, #585a65 50%, #3f4149);
  font-size: 16px;
}

.form-body {
  padding: 17px 0 15px;
  color: #f0f0f0;
}

.form-body.port2 {
  padding-top: 9px;
}

.radio, .check {
  display: flex;
  align-items: center;
  height: 20px;
  padding-left: 31px;
}

.check {
  padding-left: 8px;
  margin-bottom: 7px;
}

.radio input {
  appearance: none;
  width: 20px;
  height: 20px;
  margin-right: 11px;
  border: 1px solid #111;
  border-radius: 50%;
  background: linear-gradient(#c4c4c4, #dadada 45%, #c4c4c4 50%, #e6e6e6);
}

.radio input:checked {
  background: radial-gradient(circle, #24358f 4px, #9cd4fa 6px);
}

.check input {
  appearance: none;
  position: relative;
  width: 15px;
  height: 15px;
  margin-right: 4px;
  background: #7db0ee;
}

.check input::after {
  content: "";
  position: absolute;
  left: 6px;
  top: -1px;
  width: 6px;
  height: 12px;
  border: solid #23378f;
  border-width: 0 2px 2px 0;
  transform: rotate(40deg);
}

.fields {
  display: grid;
  grid-template-columns: 159px 248px;
  gap: 3px 8px;
  margin: 1px 0 8px;
  text-align: right;
}

.form input[type="text"] {
  height: 20px;
  padding: 0 2px;
  border: 2px solid #b6b7ba;
  background: #e2e4e7;
  color: #111;
}

.host-row {
  display: flex;
  gap: 7px;
  padding: 4px 0 0 54px;
}

.host-row input {
  width: 125px;
}

.settings-foot {
  display: flex;
  justify-content: flex-end;
  flex: none;
  height: 48px;
  padding: 13px 25px 0 0;
}

.reset {
  width: 145px;
  height: 25px;
  padding-bottom: 2px;
  border: 1px solid #000;
  box-shadow: inset 0 0 0 1px #5d5f68;
  background: linear-gradient(#70727c, #44464f);
}

/* Output */
.output {
  display: flex;
  flex-direction: column;
  height: 248px;
  margin-left: 1px;
}

.output-body {
  flex: 1;
  background: #4b4a4f;
}

.output-tabs {
  display: flex;
  gap: 2px;
  height: 26px;
}

.output-tabs button {
  width: 41px;
  background: #4b4a4f;
  color: #aaa;
}

.output-tabs button.current {
  background: #70b5f3;
  color: #000;
}

/* Toolbox */
.search-row {
  display: flex;
  gap: 4px;
  height: 30px;
  margin-top: 3px;
  padding: 3px 2px;
  border-top: 1px solid #aaa;
}

.search-row input {
  flex: 1;
  min-width: 0;
  padding-left: 6px;
  border: 1px solid #000;
  background: #fff;
  color: #000;
}

.search-row button {
  display: flex;
  align-items: center;
  justify-content: center;
  width: 26px;
  border: 1px solid #000;
  background: linear-gradient(#656772, #44464f);
}

.search-row .drop {
  margin-left: -5px;
}

.toolbox-body {
  flex: 1;
  display: flex;
  justify-content: flex-end;
  margin: 2px 1px 2px 2px;
}

.toolbox-body .sb {
  background: #161617;
}

.toolbox-body .sb::before {
  border-color: #3c3c3c;
}

.toolbox-desc {
  height: 128px;
  margin: 0 2px;
  border-top: 1px solid #eee;
}

/* Status bar */
.statusbar {
  height: 31px;
  background: #202022;
  border-top: 1px solid #9a9a9a;
}

/* Taskbar */
.taskbar {
  display: flex;
  align-items: stretch;
  height: 50px;
  background: linear-gradient(90deg, #223842, #223842 60%, #1c2c44 85%, #1b2a42);
}

.start {
  width: 60px;
}

.start svg, .ring svg {
  margin: auto;
}

.task-search {
  display: flex;
  align-items: center;
  gap: 15px;
  width: 358px;
  padding-left: 25px;
  background: #fff;
}

.task-search input {
  width: 200px;
  font-size: 19px;
  line-height: 28px;
}

.task-search input::placeholder {
  color: #b8b8b8;
}

.ring {
  width: 54px;
}

.apps {
  display: flex;
  gap: 11px;
  margin-left: 8px;
}

.apps button {
  width: 51px;
  border-bottom: 3px solid #76b9ed;
}

.apps svg {
  width: 30px;
  height: 30px;
  margin: 3px auto 0;
}

.apps .multi {
  border-image: linear-gradient(90deg, #76b9ed 80%, #5b8fb8 80%) 3;
}

.apps .running {
  width: 61px;
  margin: 0 -5px;
  background: #4d5d66;
}

.tray {
  display: flex;
  align-items: center;
  gap: 13px;
  margin-left: auto;
  padding-right: 31px;
}

.ime {
  font-size: 19px;
}

.clock {
  display: flex;
  flex-direction: column;
  align-items: center;
  line-height: 23px;
}

.notice {
  position: relative;
  margin-left: 12px;
}

.notice b {
  position: absolute;
  left: 10px;
  top: 9px;
  width: 20px;
  height: 20px;
  border: 1px solid #888;
  border-radius: 50%;
  background: #2a2d33;
  line-height: 18px;
  text-align: center;
}

/* Things lying over the window */
.annotations {
  position: absolute;
  left: 0;
  top: 0;
  pointer-events: none;
}

.battery {
  position: absolute;
  top: 360px;
  right: 2px;
  display: flex;
  align-items: flex-end;
  width: 12px;
  height: 75px;
  padding: 1px;
  border: 1px solid #888;
  border-radius: 5px;
  background: #000;
}

.battery span {
  width: 100%;
  height: 38px;
  border-radius: 2px 2px 4px 4px;
  background: linear-gradient(#12a84a, #22c05a 60%, #7df08a);
}

.watermark {
  position: absolute;
  right: 4px;
  bottom: 8px;
  color: rgba(215, 218, 222, 0.8);
  font-family: "Liberation Sans", "Noto Sans CJK SC", sans-serif;
  font-size: 37px;
  line-height: 48px;
  white-space: nowrap;
}
```
